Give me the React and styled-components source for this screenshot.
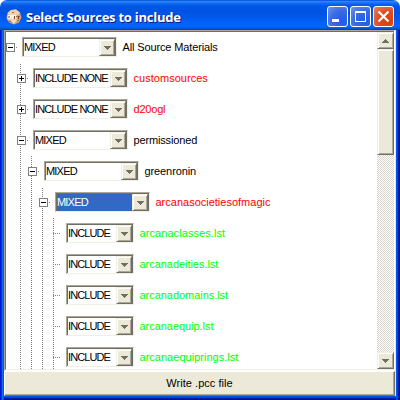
import React from "react";
import styled, { createGlobalStyle } from "styled-components";

const Global = createGlobalStyle`
  *{box-sizing:border-box}
  body{margin:0;background:#fff;overflow:hidden}
`;

const Window = styled.div`
  width:400px;height:400px;display:flex;flex-direction:column;
  border-radius:7px 7px 0 0;overflow:hidden;
  font:11px/13px "Liberation Sans",Arial,sans-serif;color:#000;
`;
const TitleBar = styled.header`
  height:30px;flex:none;display:flex;align-items:center;padding:3px 6px 0 6px;
  background:linear-gradient(180deg,#0048d8 0%,#2a86f8 5%,#1a74f4 9%,#0a62ee 14%,#0058e6 20%,#0054e3 30%,#0054e3 45%,#0059ee 60%,#0061fa 72%,#0066ff 86%,#0060f0 92%,#0050d2 96%,#0040ab 100%);
`;
const Title = styled.h1`
  margin:0 auto 0 4px;color:#fff;font:700 13px/16px "Open Sans","Noto Sans",sans-serif;
  letter-spacing:${p => p.$track}px;white-space:nowrap;text-shadow:1px 1px 0 #0a1883;
`;
const Controls = styled.div`display:flex;gap:2px;`;
const Control = styled.button`
  width:21px;height:21px;padding:0;border:1px solid #fff;border-radius:3px;display:block;
  background:${p => p.$danger
    ? "radial-gradient(circle at 75% 75%,#e03c08 0%,#e04d1f 50%,#e88567 100%)"
    : "radial-gradient(circle at 75% 75%,#1f5cec 0%,#3a6ce2 55%,#7394ee 100%)"};
  svg{display:block}
`;
const Body = styled.main`
  flex:1;min-height:0;display:flex;flex-direction:column;padding:0 4px 4px;
  background:
    linear-gradient(90deg,#0019cf 0 1px,#0831d9 1px 2px,#166aee 2px 3px,#0855dd 3px 4px) 0 0/4px 100% no-repeat,
    linear-gradient(90deg,#0455ee 0 1px,#0441d8 1px 2px,#001ea0 2px 3px,#00138c 3px 4px) 100% 0/4px 100% no-repeat,
    linear-gradient(180deg,#0455ee 0 1px,#0441d8 1px 2px,#001ea0 2px 3px,#00138c 3px 4px) 0 100%/100% 4px no-repeat,
    #ece9d8;
`;
const Frame = styled.div`
  flex:1;display:flex;flex-direction:column;min-height:0;padding-right:1px;
`;
const Pane = styled.section`
  height:341px;flex:none;display:flex;background:#fff;
  border-top:1px solid #aca899;border-left:1px solid #aca899;
  border-right:1px solid #fff;border-bottom:1px solid #fff;
`;
const PaneInner = styled.div`
  flex:1;display:flex;min-width:0;
  border-top:1px solid #716f64;border-left:1px solid #716f64;
  border-bottom:1px solid #f1efe2;
`;
const Tree = styled.div`flex:1;min-width:0;overflow:hidden;`;
const Row = styled.div`height:31px;display:flex;`;
const dotsV = (odd) => odd
  ? "repeating-linear-gradient(180deg,transparent 0 1px,#808080 1px 2px)"
  : "repeating-linear-gradient(180deg,#808080 0 1px,transparent 1px 2px)";
const dotsH = "repeating-linear-gradient(90deg,#808080 0 1px,transparent 1px 2px)";
const Indent = styled.span`
  display:block;flex:none;width:11px;height:31px;
  background:${p => (p.$line ? dotsV(p.$odd) : "none")} 3px 0/1px 31px no-repeat;
`;
const Node = styled.span`
  flex:none;width:16px;height:31px;display:flex;align-items:center;
  background:${dotsH} ${p => (p.$leaf ? 3 : 10)}px 15px/${p => (p.$leaf ? 8 : 2)}px 1px no-repeat,
    ${p => (p.$root ? "none" : dotsV(p.$odd))} 3px 0/1px 31px no-repeat;
`;
const Toggle = styled.svg`display:block;`;
const Combo = styled.div`
  width:${p => p.$w}px;height:20px;margin-top:5px;flex:none;display:flex;
  border:1px solid;border-color:#aca899 #f1efe2 #f1efe2 #aca899;
`;
const ComboInner = styled.div`
  flex:1;min-width:0;display:flex;border:1px solid #716f64;border-bottom:0;background:#fff;
`;
const Value = styled.span`
  flex:1;min-width:0;padding:2px 0 0 0;white-space:nowrap;letter-spacing:${p => p.$track}px;
  background:${p => (p.$on ? "#316ac5" : "#fff")};color:${p => (p.$on ? "#fff" : "#000")};
`;
const Bevel = styled.span`
  display:flex;align-items:center;justify-content:center;flex:none;
  width:${p => p.$w}px;height:${p => p.$h}px;background:#ece9d8;
  border:1px solid;border-color:#f1efe2 #716f64 #716f64 #f1efe2;
  box-shadow:inset 1px 1px 0 #fff,inset -1px -1px 0 #aca899;
`;
const Label = styled.span`
  padding:9px 0 0 5.500px;white-space:nowrap;color:${p => p.$c};letter-spacing:${p => p.$track}px;
`;
const Scroll = styled.div`
  width:17px;flex:none;display:flex;flex-direction:column;
  background:repeating-conic-gradient(#d9d5c9 0 25%,#fff 0 50%) 0 0/2px 2px;
`;
const Spacer = styled.span`flex:1;`;
const Action = styled.button`
  flex:1;margin:0;padding:0;font:inherit;letter-spacing:.04px;color:#000;background:#ece9d8;
  border:1px solid;border-color:#fff #716f64 #716f64 #fff;box-shadow:inset -1px -1px 0 #aca899;
`;

const Arrow = ({ up }) => (
  <svg width="7" height="4" shapeRendering="crispEdges" fill="#716f64">
    <path d={up ? "M3 0h1v1h1v1h1v1h1v1H0V3h1V2h1V1h1z" : "M0 0h7v1H6v1H5v1H4v1H3V3H2V2H1V1H0z"} />
  </svg>
);
const Expander = ({ plus }) => (
  <Toggle width="9" height="9" shapeRendering="crispEdges">
    <rect width="9" height="9" fill="#808080" />
    <rect x="1" y="1" width="7" height="7" fill="#fff" />
    <path d={plus ? "M2 4h5v1H2zM4 2h1v5H4z" : "M2 4h5v1H2z"} />
  </Toggle>
);
const DiceIcon = () => (
  <svg width="16" height="16" viewBox="0 0 16 16">
    <path d="M5 1l5-.5 4 3 1.500 5-2.500 5-5 2-5-2L.5 9l1-5z" fill="#cfa47c" />
    <path d="M5 1l5-.5 4 3-2 2.500H3L1.500 4z" fill="#ecd2b0" />
    <path d="M1.500 6h9v4.500h-9z" fill="#fdf0e0" />
    <path d="M4 11h7l-3 4z" fill="#f0dcc0" />
    <path d="M3 7v2M8.500 7v3M12.500 7v3" stroke="#7a4630" />
    <path d="M10 7h2v1h-2zM13 7h1v1h-1zM3 12h2v1H3zM11 11h2v1h-2zM6 3h2v1H6z" fill="#a86b42" />
  </svg>
);

const R = "#ff0000", G = "#00ff00", K = "#000";
const rows = [
  [0, "-", "MIXED", "All Source Materials", K, -0.13],
  [1, "+", "INCLUDE NONE", "customsources", R, 0.03],
  [1, "+", "INCLUDE NONE", "d20ogl", R, -0.2],
  [1, "-", "MIXED", "permissioned", K, -0.15],
  [2, "-", "MIXED", "greenronin", K, -0.1],
  [3, "-", "MIXED", "arcanasocietiesofmagic", R, 0, true],
  [4, "", "INCLUDE", "arcanaclasses.lst", G, 0.08],
  [4, "", "INCLUDE", "arcanadeities.lst", G, -0.04],
  [4, "", "INCLUDE", "arcanadomains.lst", G, -0.04],
  [4, "", "INCLUDE", "arcanaequip.lst", G, -0.04],
  [4, "", "INCLUDE", "arcanaequiprings.lst", G, 0.02],
];
const valueTrack = { MIXED: -0.8, "INCLUDE NONE": -0.87, INCLUDE: -0.9 };

const TreeRow = ({ row: [depth, mark, value, label, color, track, on], odd }) => (
  <Row>
    {Array.from({ length: depth }, (_, i) => <Indent key={i} $line={i > 0} $odd={odd} />)}
    <Node $root={depth === 0} $leaf={!mark} $odd={odd}>{mark && <Expander plus={mark === "+"} />}</Node>
    <Combo $w={mark ? 95 : 68}>
      <ComboInner>
        <Value $on={on} $track={valueTrack[value]}>{value}</Value>
        <Bevel $w={16} $h={17}><Arrow /></Bevel>
      </ComboInner>
    </Combo>
    <Label $c={color} $track={track}>{label}</Label>
  </Row>
);

export default function App() {
  return (
    <>
      <Global />
      <Window>
        <TitleBar>
          <DiceIcon />
          <Title $track={-0.24}>Select Sources to include</Title>
          <Controls>
            <Control aria-label="Minimize"><svg width="19" height="19"><path d="M4 12h7v3H4z" fill="#fff" /></svg></Control>
            <Control aria-label="Maximize"><svg width="19" height="19"><path fillRule="evenodd" d="M4 4h11v11H4zM5 6v8h9V6z" fill="#fff" /></svg></Control>
            <Control $danger aria-label="Close"><svg width="19" height="19"><path d="M4.500 4.500l10 10M14.500 4.500l-10 10" stroke="#fff" strokeWidth="2.200" /></svg></Control>
          </Controls>
        </TitleBar>
        <Body>
          <Frame>
            <Pane>
              <PaneInner>
                <Tree>{rows.map((r, i) => <TreeRow key={r[3]} row={r} odd={i % 2 === 1} />)}</Tree>
                <Scroll>
                  <Bevel $w={17} $h={17}><Arrow up /></Bevel>
                  <Bevel $w={17} $h={106} />
                  <Spacer />
                  <Bevel $w={17} $h={17}><Arrow /></Bevel>
                </Scroll>
              </PaneInner>
            </Pane>
            <Action>Write .pcc file</Action>
          </Frame>
        </Body>
      </Window>
    </>
  );
}
